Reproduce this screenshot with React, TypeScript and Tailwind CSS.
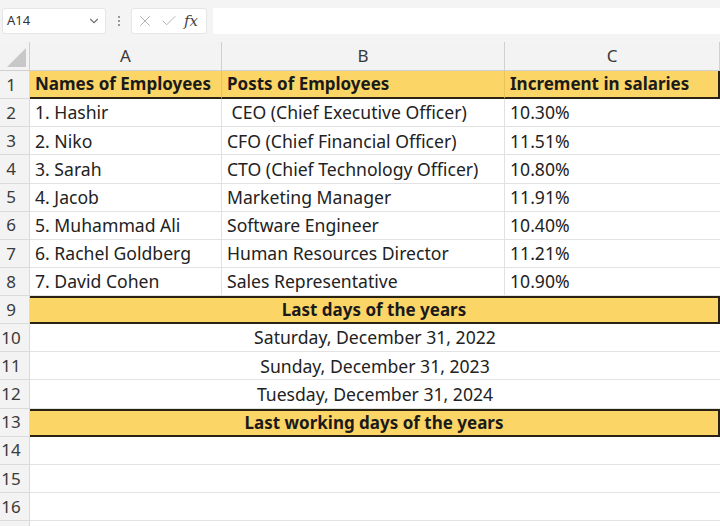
import { ChevronDown, X, Check } from 'lucide-react'

const font = { fontFamily: '"Noto Sans", "Open Sans", sans-serif' }

const employees = [
  ['1. Hashir', ' CEO (Chief Executive Officer)', '10.30%'],
  ['2. Niko', 'CFO (Chief Financial Officer)', '11.51%'],
  ['3. Sarah', 'CTO (Chief Technology Officer)', '10.80%'],
  ['4. Jacob', 'Marketing Manager', '11.91%'],
  ['5. Muhammad Ali', 'Software Engineer', '10.40%'],
  ['6. Rachel Goldberg', 'Human Resources Director', '11.21%'],
  ['7. David Cohen', 'Sales Representative', '10.90%'],
]

const dates = ['Saturday, December 31, 2022', 'Sunday, December 31, 2023', 'Tuesday, December 31, 2024']

function RowNum({ n }: { n?: number }) {
  return (
    <div className="h-[28.13px] bg-[#f3f3f3] border-b border-r border-[#dadada] flex items-center text-[17px] text-[#3a3a3a]">
      <span className="w-[22px] text-center">{n}</span>
    </div>
  )
}

function Cell({ children, className = '' }: { children?: React.ReactNode; className?: string }) {
  return (
    <div className={`h-[28.13px] border-b border-r border-[#e2e2e2] flex items-center pl-[5px] text-[17.6px] text-[#222] whitespace-pre overflow-hidden ${className}`}>
      {children}
    </div>
  )
}

function Banner({ text, n }: { text: string; n: number }) {
  return (
    <>
      <RowNum n={n} />
      <div className="col-span-3 h-[28.13px] bg-[#fcd567] border-y-2 border-r-2 border-[#2a2313] flex items-center justify-center text-[17px] font-bold text-[#1a1a1a]">
        {text}
      </div>
    </>
  )
}

export default function App() {
  return (
    <div className="w-[720px] h-[526px] bg-white overflow-hidden" style={font}>
      <div className="h-[42px] bg-[#f4f4f4] flex items-center pl-[2px]">
        <div className="w-[104px] h-[26px] bg-white rounded-[3px] border border-[#e6e6e6] flex items-center justify-between px-[4px] text-[13px] text-[#333]">
          <span>A14</span>
          <ChevronDown size={14} className="text-[#777]" />
        </div>
        <div className="w-[25px] flex flex-col items-center gap-[2px]">
          <span className="w-[2px] h-[2px] bg-[#999]" />
          <span className="w-[2px] h-[2px] bg-[#999]" />
          <span className="w-[2px] h-[2px] bg-[#999]" />
        </div>
        <div className="w-[76px] h-[26px] bg-white rounded-[3px] border border-[#e6e6e6] flex items-center gap-[6px] px-[4px]">
          <X size={18} strokeWidth={1.3} className="text-[#b0b0b0]" />
          <Check size={18} strokeWidth={1.3} className="text-[#b0b0b0]" />
          <span className="italic text-[15px] text-[#444]" style={{ fontFamily: '"DejaVu Serif", serif' }}>fx</span>
        </div>
        <div className="flex-1 h-[26px] bg-white ml-[6px]" />
      </div>
      <div className="grid grid-cols-[30px_192px_283px_1fr]">
        <div className="h-[29px] bg-[#f3f3f3] border-r border-b border-[#d0d0d0] relative">
          <div className="absolute right-[3px] bottom-[3px] w-0 h-0 border-l-[19px] border-l-transparent border-b-[19px] border-b-[#c8c8c8]" />
        </div>
        {['A', 'B', 'C'].map((c) => (
          <div key={c} className="h-[29px] bg-[#f3f3f3] border-r border-b border-[#d0d0d0] flex items-center justify-center text-[17px] text-[#3a3a3a]">
            {c}
          </div>
        ))}

        <RowNum n={1} />
        {['Names of Employees', 'Posts of Employees', 'Increment in salaries'].map((h, i) => (
          <div
            key={h}
            className={`h-[28.13px] bg-[#fcd567] border-b-2 border-[#2a2313] flex items-center pl-[5px] text-[17px] font-bold text-[#1a1a1a] whitespace-nowrap ${i === 2 ? 'border-r-2' : 'border-r border-r-[#e8c35a]'}`}
          >
            {h}
          </div>
        ))}

        {employees.map((r, i) => (
          <div key={i} className="contents">
            <RowNum n={i + 2} />
            <Cell>{r[0]}</Cell>
            <Cell>{r[1]}</Cell>
            <Cell className="border-r-0">{r[2]}</Cell>
          </div>
        ))}

        <Banner n={9} text="Last days of the years" />
        {dates.map((d, i) => (
          <div key={d} className="contents">
            <RowNum n={10 + i} />
            <div className="col-span-3 h-[28.13px] border-b border-[#e2e2e2] flex items-center justify-center text-[17.6px] text-[#222]">
              {d}
            </div>
          </div>
        ))}
        <Banner n={13} text="Last working days of the years" />

        {[14, 15, 16].map((n) => (
          <div key={n} className="contents">
            <RowNum n={n} />
            <div className="col-span-3 h-[28.13px] border-b border-[#e2e2e2]" />
          </div>
        ))}
        <RowNum />
        <div className="col-span-3 h-[28.13px]" />
      </div>
    </div>
  )
}
